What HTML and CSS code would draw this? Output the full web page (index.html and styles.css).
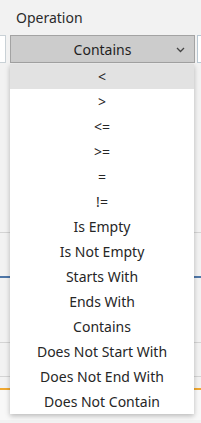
FILE: index.html
```html
<!DOCTYPE html>
<html lang="en">
<head>
    <meta charset="UTF-8">
    <meta name="viewport" content="width=device-width, initial-scale=1.0">
    <title>Operation</title>
    <link rel="stylesheet" href="styles.css">
</head>
<body>
    <div class="panel">
        <div class="header">Operation</div>

        <div class="field-row">
            <div class="stub stub-left"></div>
            <div class="select">
                <span class="select-value">Contains</span>
                <svg class="chevron" width="9" height="6" viewBox="0 0 9 6">
                    <path d="M1 1 L4.5 4.5 L8 1" fill="none" stroke="#444" stroke-width="1.3"/>
                </svg>
            </div>
            <div class="stub stub-right"></div>
        </div>

        <!-- rows of the grid behind the open list -->
        <div class="grid-back">
            <div class="grid-row row-a"></div>
            <div class="grid-row row-b"></div>
            <div class="grid-row row-c"></div>
            <div class="grid-row row-d"></div>
            <div class="grid-row row-e"></div>
            <div class="grid-row row-f"></div>
        </div>

        <ul class="options">
            <li class="option active">&lt;</li>
            <li class="option">&gt;</li>
            <li class="option">&lt;=</li>
            <li class="option">&gt;=</li>
            <li class="option">=</li>
            <li class="option">!=</li>
            <li class="option">Is Empty</li>
            <li class="option">Is Not Empty</li>
            <li class="option">Starts With</li>
            <li class="option">Ends With</li>
            <li class="option">Contains</li>
            <li class="option">Does Not Start With</li>
            <li class="option">Does Not End With</li>
            <li class="option">Does Not Contain</li>
        </ul>
    </div>
</body>
</html>
```

FILE: styles.css
```css
body {
    font-family: 'Noto Sans', 'Open Sans', sans-serif;
    background-color: #f2f2f2;
    margin: 0;
    width: 201px;
    height: 423px;
    overflow: hidden;
    color: #333;
}

.panel {
    position: relative;
    height: 423px;
    overflow: hidden;
}

.header {
    height: 35px;
    padding-left: 16px;
    font-size: 14px;
    line-height: 36px;
    color: #2b2b2b;
}

.field-row {
    display: flex;
    height: 28px;
}

.stub {
    flex: none;
    height: 26px;
    background: #fff;
    border: 1px solid #c9d1d6;
}

.stub-left {
    width: 6px;
    margin-left: -2px;
    margin-right: 4px;
}

.stub-right {
    width: 10px;
    margin-left: 2px;
    border-color: #b9c7d2;
}

.select {
    flex: none;
    width: 183px;
    display: flex;
    align-items: center;
    justify-content: center;
    position: relative;
    background: #cccccc;
    border: 1px solid #a3a3a3;
    font-size: 14px;
    color: #1f1f1f;
}

.chevron {
    position: absolute;
    right: 9px;
    top: 11px;
}

.grid-back {
    display: flex;
    flex-direction: column;
}

.grid-row {
    border-bottom: 1px solid #d4d4d4;
}

.row-a {
    height: 169px;
}

.row-b {
    height: 43px;
    border-bottom: 2px solid #4f77a8;
}

.row-c {
    height: 64px;
}

.row-d {
    height: 33px;
}

.row-e {
    height: 11px;
    border-bottom: 2px solid #f0a830;
}

.row-f {
    height: 30px;
    border-bottom: none;
    background: #f8f8f8;
}

.options {
    position: absolute;
    top: 64px;
    left: 10px;
    width: 184px;
    margin: 0;
    padding: 0;
    list-style: none;
    background: #fff;
    box-shadow: 0 2px 5px rgba(0, 0, 0, 0.25);
}

.option {
    height: 25px;
    line-height: 26px;
    text-align: center;
    font-size: 14px;
    color: #262626;
}

.option.active {
    background: #e2e2e2;
}
```
